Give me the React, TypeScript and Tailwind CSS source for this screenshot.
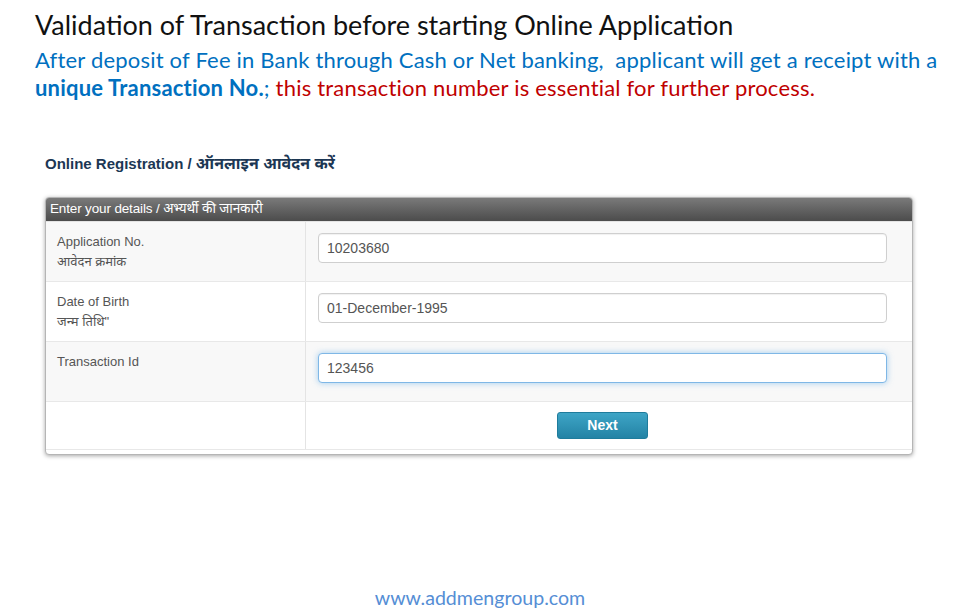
import React from 'react';

const hindi = "'Noto Sans Devanagari', 'Lohit Devanagari', 'Noto Sans', sans-serif";

interface Row {
  label: string;
  sub?: string;
  value: string;
  focused?: boolean;
}

const rows: Row[] = [
  { label: 'Application No.', sub: 'आवेदन क्रमांक', value: '10203680' },
  { label: 'Date of Birth', sub: 'जन्म तिथि"', value: '01-December-1995' },
  { label: 'Transaction Id', value: '123456', focused: true },
];

export default function App() {
  return (
    <div className="flex flex-col h-[616px] w-[960px] bg-white overflow-hidden">
      {/* slide heading */}
      <div className="pl-[35px] pt-[8px]" style={{ fontFamily: "Lato, 'Open Sans', sans-serif" }}>
        <h1 className="text-[27px] leading-[34px] text-[#111]">
          Validation of Transaction before starting Online Application
        </h1>
        <p className="mt-[4px] text-[22px] leading-[28px] text-[#0070c0] whitespace-pre tracking-[0.2px]">
          {'After deposit of Fee in Bank through Cash or Net banking,  applicant will get a receipt with a'}
        </p>
        <p className="text-[22px] leading-[28px] tracking-[0.2px]">
          <span className="font-bold text-[#0070c0]">unique Transaction No.</span>
          <span className="text-[#0070c0]">; </span>
          <span className="text-[#c00000]">this transaction number is essential for further process.</span>
        </p>
      </div>

      {/* form screenshot */}
      <div className="ml-[45px] mt-[52px] w-[868px]" style={{ fontFamily: "'Liberation Sans', Arial, " + hindi }}>
        <h2 className="text-[15px] leading-[20px] font-bold text-[#1c3754]">
          Online Registration / <span className="text-[16px]">ऑनलाइन आवेदन करें</span>
        </h2>

        <div className="mt-[23px] border border-[#b5b5b5] rounded-[4px] shadow-[0_1px_4px_rgba(0,0,0,0.35)] bg-white overflow-hidden pb-[4px]">
          <div className="h-[23px] flex items-center px-[4px] bg-gradient-to-b from-[#7a7a7a] to-[#4c4c4c] text-white text-[13.5px] tracking-[-0.15px]">
            Enter your details / अभ्यर्थी की जानकारी
          </div>

          <div className="border-t border-[#e4e4e4]">
            {rows.map((r, i) => (
              <div
                key={r.label}
                className={`flex h-[60px] border-b border-[#e8e8e8] ${i % 2 === 0 ? 'bg-[#f8f8f8]' : 'bg-white'}`}
              >
                <div className="w-[260px] shrink-0 border-r border-[#e4e4e4] pl-[11px] pt-[10px] text-[13px] leading-[20px] text-[#555]">
                  <div>{r.label}</div>
                  {r.sub && <div>{r.sub}</div>}
                </div>
                <div className="flex-1 pl-[12px] pr-[25px] pt-[11px]">
                  <div
                    className={`h-[30px] flex items-center pl-[8px] rounded-[4px] bg-white text-[14px] text-[#555] border ${
                      r.focused
                        ? 'border-[#7fb7e6] shadow-[0_0_6px_rgba(102,175,233,0.6)]'
                        : 'border-[#cfcfcf] shadow-[inset_0_1px_1px_rgba(0,0,0,0.06)]'
                    }`}
                  >
                    {r.value}
                  </div>
                </div>
              </div>
            ))}
            <div className="flex h-[48px] border-b border-[#e8e8e8] bg-white">
              <div className="w-[260px] shrink-0 border-r border-[#e4e4e4]" />
              <div className="flex-1 pl-[12px] pr-[25px] pt-[10px] flex justify-center">
                <button className="h-[27px] w-[91px] rounded-[3px] border border-[#1f7c9c] bg-gradient-to-b from-[#3ea5c6] to-[#2383a5] text-white text-[14px] font-bold">
                  Next
                </button>
              </div>
            </div>
          </div>
        </div>
      </div>

      <div
        className="mt-auto mb-[6px] text-center text-[19.6px] leading-[24px] text-[#558ed5]"
        style={{ fontFamily: "Lato, 'Open Sans', sans-serif" }}
      >
        www.addmengroup.com
      </div>
    </div>
  );
}
